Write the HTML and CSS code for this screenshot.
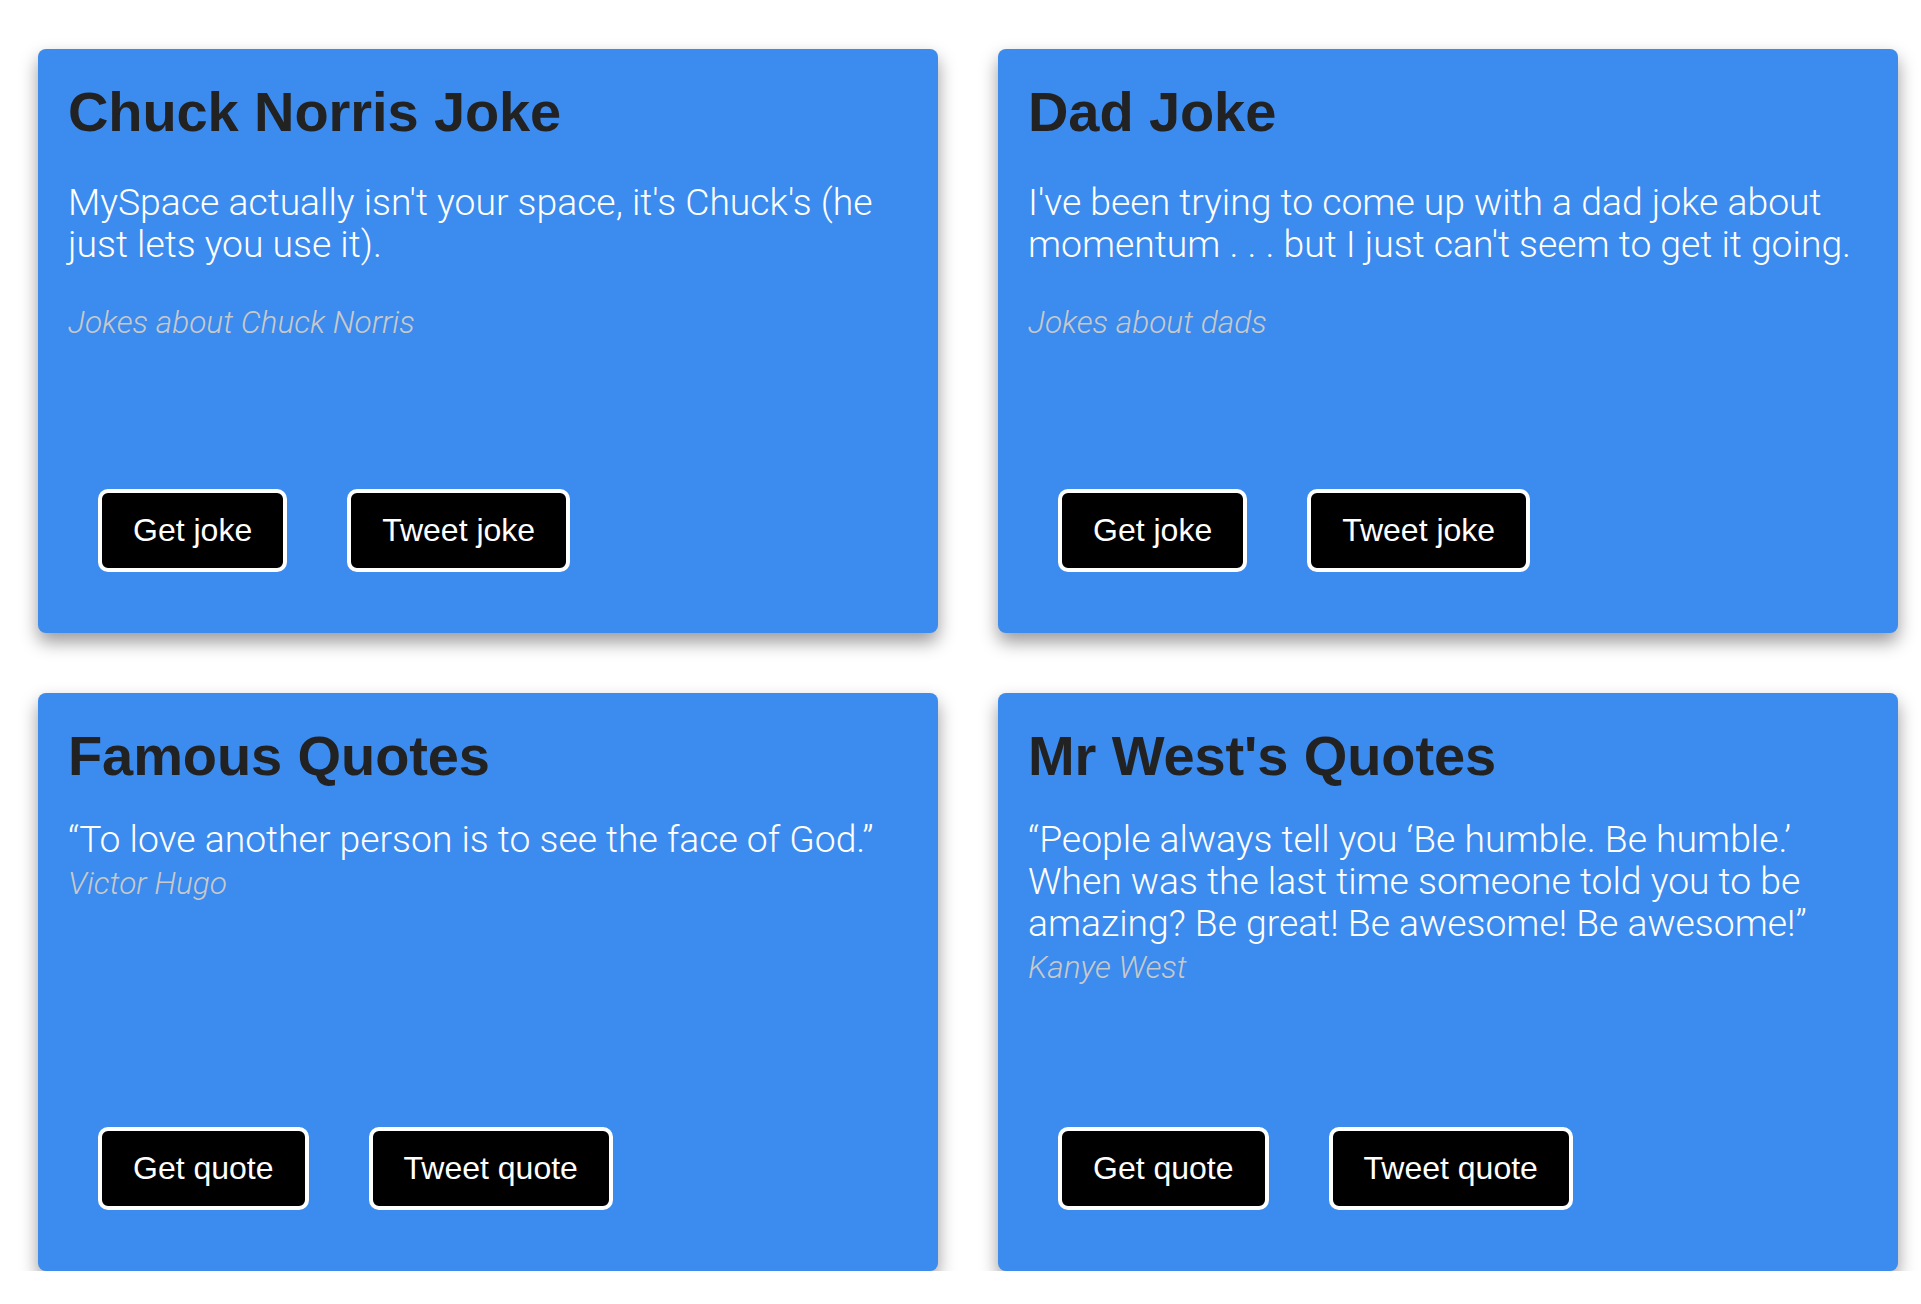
FILE: index.html
```html
<!DOCTYPE html>
<html lang="en">
<head>
<meta charset="utf-8">
<title>Jokes and Quotes</title>
<link rel="stylesheet" href="styles.css">
</head>
<body>
<main class="grid">
  <section class="card card-joke">
    <h1 class="card-title">Chuck Norris Joke</h1>
    <p class="joke-text">MySpace actually isn't your space, it's Chuck's (he just lets you use it).</p>
    <p class="category">Jokes about Chuck Norris</p>
    <div class="actions">
      <button class="btn">Get joke</button>
      <button class="btn">Tweet joke</button>
    </div>
  </section>
  <section class="card card-joke">
    <h1 class="card-title">Dad Joke</h1>
    <p class="joke-text">I've been trying to come up with a dad joke about momentum . . . but I just can't seem to get it going.</p>
    <p class="category">Jokes about dads</p>
    <div class="actions">
      <button class="btn">Get joke</button>
      <button class="btn">Tweet joke</button>
    </div>
  </section>
  <section class="card card-quote">
    <h1 class="card-title">Famous Quotes</h1>
    <p class="quote-text">“To love another person is to see the face of God.”</p>
    <p class="author">Victor Hugo</p>
    <div class="actions">
      <button class="btn">Get quote</button>
      <button class="btn">Tweet quote</button>
    </div>
  </section>
  <section class="card card-quote">
    <h1 class="card-title">Mr West's Quotes</h1>
    <p class="quote-text">“People always tell you ‘Be humble. Be humble.’ When was the last time someone told you to be amazing? Be great! Be awesome! Be awesome!”</p>
    <p class="author">Kanye West</p>
    <div class="actions">
      <button class="btn">Get quote</button>
      <button class="btn">Tweet quote</button>
    </div>
  </section>
</main>
</body>
</html>
```
FILE: styles.css
```css
* { box-sizing: border-box; }

html, body {
  margin: 0;
  padding: 0;
  background: #ffffff;
}

body {
  font-family: "Liberation Sans", Arial, sans-serif;
  padding: 49px 0 0 38px;
}

.grid {
  display: grid;
  grid-template-columns: 900px 900px;
  grid-template-rows: 584px 578px;
  column-gap: 60px;
  row-gap: 60px;
}

.card {
  display: flex;
  flex-direction: column;
  background: #3c8bee;
  border-radius: 8px;
  box-shadow: 0 9px 18px rgba(0, 0, 0, 0.4);
  padding: 31px 30px 61px 30px;
}

.card-title {
  margin: 0;
  font-size: 56px;
  line-height: 64px;
  font-weight: 700;
  color: #222222;
  letter-spacing: -0.1px;
}

.joke-text,
.quote-text {
  margin: 37px 0 0 0;
  font-family: "Roboto", "Liberation Sans", sans-serif;
  font-size: 37.3px;
  line-height: 42px;
  font-weight: 300;
  color: #ffffff;
}

.quote-text {
  margin-top: 30px;
}

.category,
.author {
  margin: 40px 0 0 0;
  font-family: "Roboto", "Liberation Sans", sans-serif;
  font-size: 31.6px;
  line-height: 36px;
  font-style: italic;
  font-weight: 300;
  color: #c9c9c9;
}

.author {
  margin-top: 4px;
  line-height: 40px;
}

.actions {
  margin-top: auto;
  display: flex;
  gap: 60px;
  padding-left: 30px;
}

.btn {
  font-family: "Liberation Sans", Arial, sans-serif;
  font-size: 32px;
  line-height: 37px;
  color: #ffffff;
  background: #000000;
  border: 4px solid #ffffff;
  border-radius: 10px;
  padding: 19px 31px;
  cursor: pointer;
}
```
